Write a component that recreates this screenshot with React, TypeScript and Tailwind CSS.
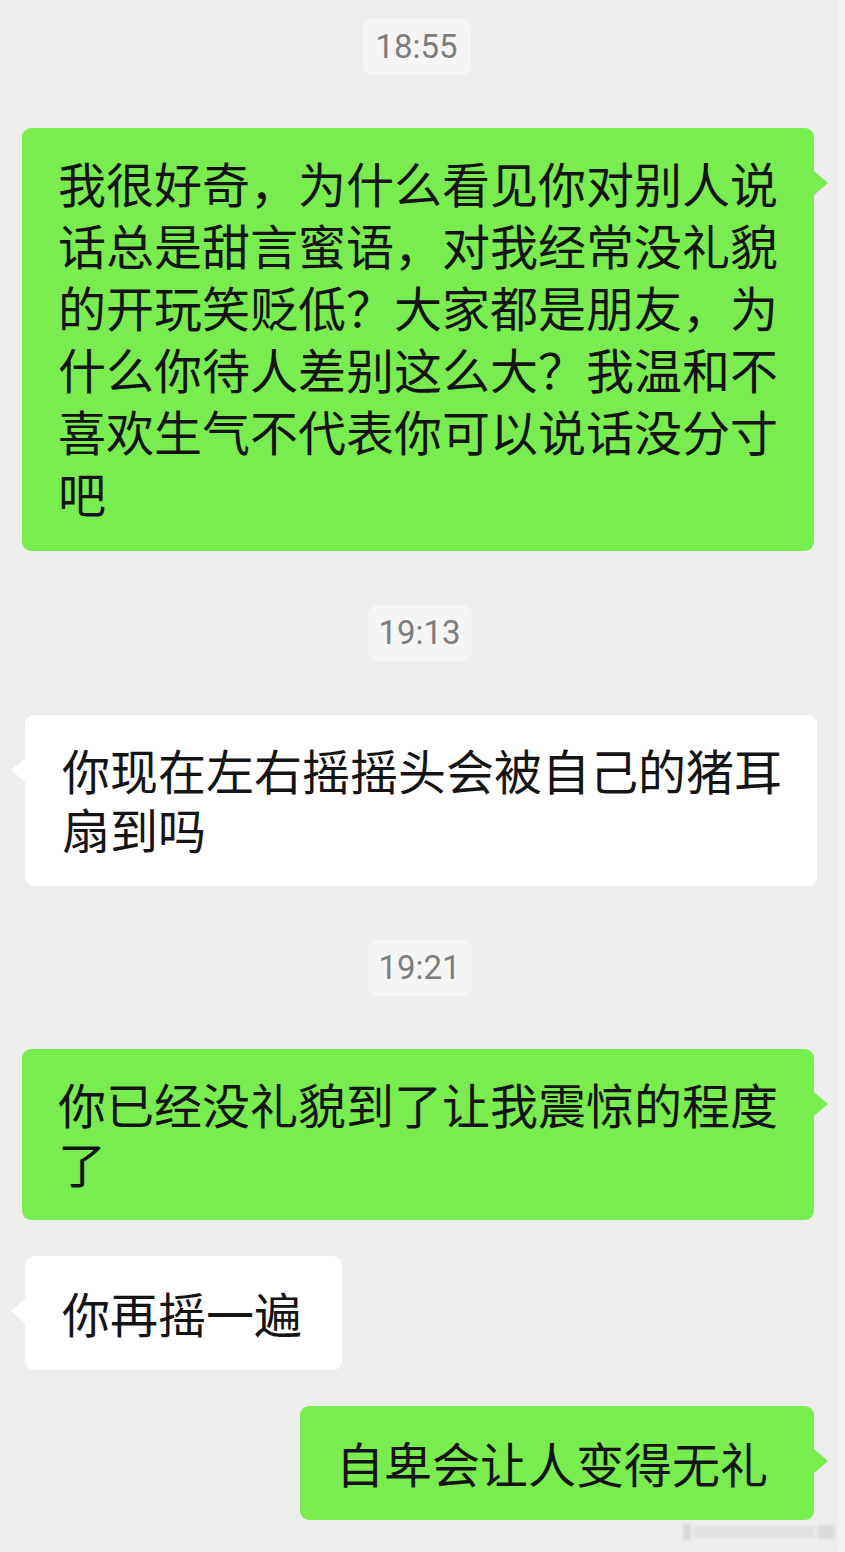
import React from "react";

const FONT = '"Noto Sans CJK SC", "Noto Sans", sans-serif';

function Time({ t, w }: { t: string; w: string }) {
  return (
    <div className="flex justify-center">
      <div
        className={`${w} h-[56px] flex items-center justify-center rounded-[9px] bg-[#f5f5f5] text-[33px] text-[#7d7d7d]`}
        style={{ fontFamily: 'Roboto, "Noto Sans", sans-serif' }}
      >
        {t}
      </div>
    </div>
  );
}

function Green({ lines, cls = "", lead = "leading-[62px]" }: { lines: string[]; cls?: string; lead?: string }) {
  return (
    <div className="flex justify-end pr-[25px]">
      <div className={`relative rounded-[9px] bg-[#79ec50] ${cls}`}>
        <div className={`whitespace-nowrap text-[48px] ${lead} text-[#141414]`}>
          {lines.map((l, i) => (
            <div key={i}>{l}</div>
          ))}
        </div>
        <div className="absolute right-[-14px] top-[43px] h-0 w-0 border-y-[12px] border-l-[14px] border-y-transparent border-l-[#79ec50]" />
      </div>
    </div>
  );
}

function White({ lines, cls = "", lead = "leading-[62px]" }: { lines: string[]; cls?: string; lead?: string }) {
  return (
    <div className="flex justify-start pl-[25px]">
      <div className={`relative rounded-[9px] bg-white ${cls}`}>
        <div className={`whitespace-nowrap text-[48px] ${lead} text-[#141414]`}>
          {lines.map((l, i) => (
            <div key={i}>{l}</div>
          ))}
        </div>
        <div className="absolute left-[-14px] top-[43px] h-0 w-0 border-y-[12px] border-r-[14px] border-y-transparent border-r-white" />
      </div>
    </div>
  );
}

export default function App() {
  return (
    <div className="flex h-[1552px] w-[845px] overflow-hidden bg-[#ededed]" style={{ fontFamily: FONT }}>
      <div className="relative flex w-[839px] flex-col pt-[19px]">
        <Time t="18:55" w="w-[108px] ml-[-6px]" />
        <div className="h-[53px]" />
        <Green
          cls="w-[792px] pl-[36px] pr-[36px] pt-[23px] pb-[28px]"
          lines={[
            "我很好奇，为什么看见你对别人说",
            "话总是甜言蜜语，对我经常没礼貌",
            "的开玩笑贬低？大家都是朋友，为",
            "什么你待人差别这么大？我温和不",
            "喜欢生气不代表你可以说话没分寸",
            "吧",
          ]}
        />
        <div className="h-[54px]" />
        <Time t="19:13" w="w-[104px]" />
        <div className="h-[54px]" />
        <White
          cls="w-[792px] pl-[37px] pr-[35px] pt-[25px] pb-[28px]"
          lead="leading-[59px]"
          lines={["你现在左右摇摇头会被自己的猪耳", "扇到吗"]}
        />
        <div className="h-[54px]" />
        <Time t="19:21" w="w-[104px]" />
        <div className="h-[53px]" />
        <Green
          cls="w-[792px] pl-[36px] pr-[36px] pt-[25px] pb-[28px]"
          lead="leading-[59px]"
          lines={["你已经没礼貌到了让我震惊的程度", "了"]}
        />
        <div className="h-[36px]" />
        <White cls="pl-[37px] pr-[40px] pt-[25px] pb-[27px]" lines={["你再摇一遍"]} />
        <div className="h-[36px]" />
        <Green cls="pl-[36px] pr-[46px] pt-[25px] pb-[27px]" lines={["自卑会让人变得无礼"]} />
        <div className="mt-[4px] flex justify-end pr-[4px]">
          <div className="flex items-center gap-[3px] opacity-70 blur-[1.5px]">
            <div className="h-[16px] w-[8px] bg-[#d0d0d0]" />
            <div className="h-[12px] w-[120px] bg-[#dcdcdc]" />
            <div className="h-[14px] w-[18px] bg-[#d4d4d4]" />
          </div>
        </div>
      </div>
      <div className="w-[6px] bg-[#f4f4f4]" />
    </div>
  );
}
